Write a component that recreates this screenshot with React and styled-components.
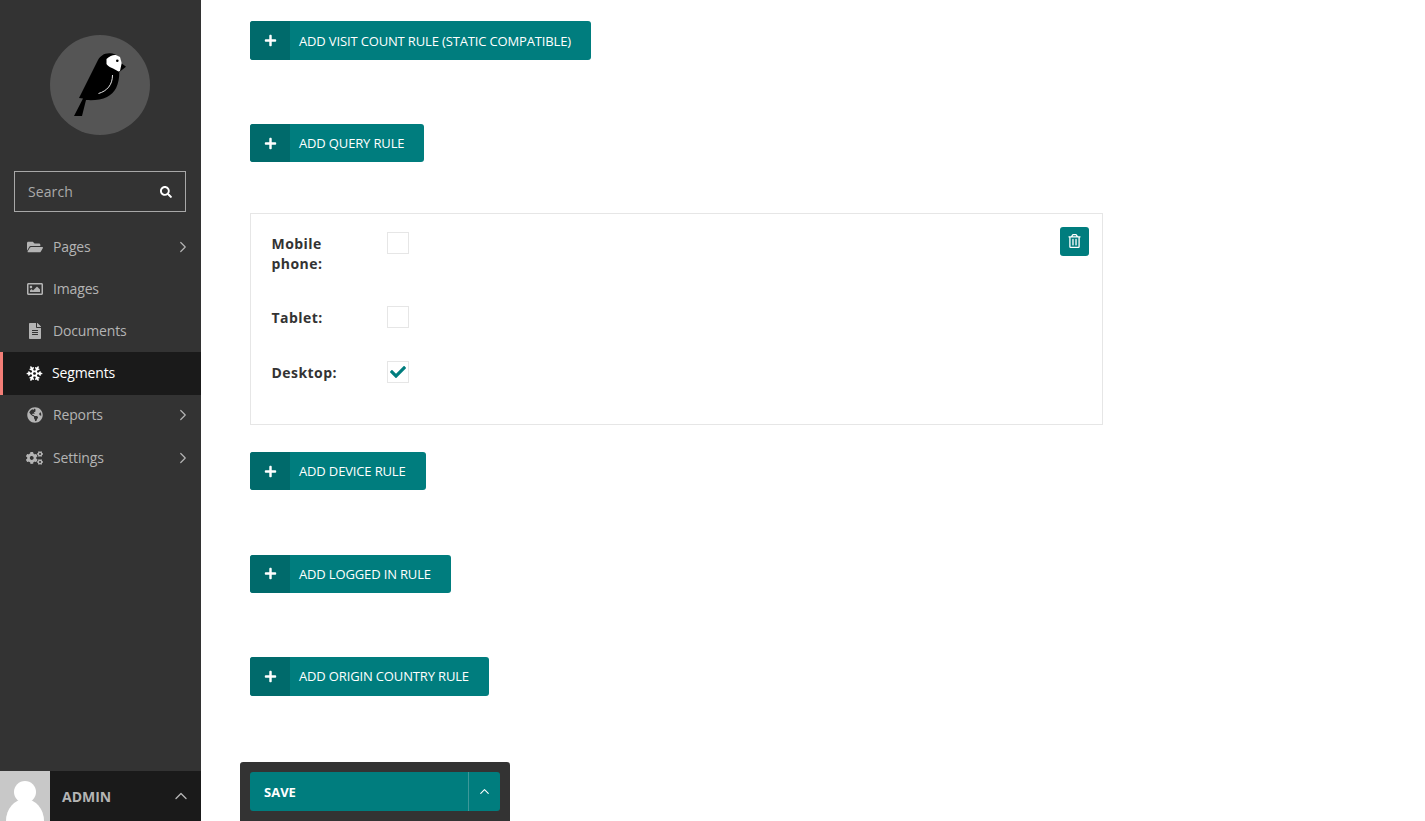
import React from 'react';
import styled, { createGlobalStyle } from 'styled-components';
import { FaFolderOpen, FaRegImage, FaFileAlt, FaGlobeAmericas, FaCogs, FaPlus, FaCheck, FaSearch, FaRegTrashAlt } from 'react-icons/fa';
import { ChevronRight, ChevronUp, Snowflake } from 'lucide-react';

const Global = createGlobalStyle`
  html, body { margin: 0; padding: 0; height: 100%; overflow: hidden; background: #fff; }
  * { box-sizing: border-box; }
  body { font-family: "Open Sans", "Liberation Sans", sans-serif; color: #333; }
`;
const Page = styled.div`display: flex; height: 821px;`;
const Sidebar = styled.aside`
  width: 201px; flex: none; background: #333; display: flex; flex-direction: column; height: 100%;
`;
const LogoWrap = styled.div`display: flex; justify-content: center; padding: 35px 1px 36px 0;`;
const Logo = styled.svg`width: 100px; height: 100px; display: block;`;
const SearchBox = styled.div`
  margin: 0 15px 0 14px; height: 41px; border: 1px solid #a8a8a8; display: flex; align-items: center;
  justify-content: space-between; padding: 0 13px 0 13px; color: #aaa; font-size: 14px; letter-spacing: .1px;
  svg { color: #fff; width: 12px; height: 12px; }
`;
const Nav = styled.nav`margin-top: 14px; display: flex; flex-direction: column; flex: 1;`;
const NavItem = styled.div`
  height: ${p => p.$h}px; display: flex; align-items: center; font-size: 14px; letter-spacing: -.15px;
  padding: 0 9px ${p => p.$pb}px ${p => (p.$active ? 23 : 26)}px;
  color: ${p => (p.$active ? '#fff' : '#b4b4b4')};
  background: ${p => (p.$active ? '#1a1a1a' : 'transparent')};
  border-left: ${p => (p.$active ? '3px solid #f37e77' : 'none')};
`;
const NavIcon = styled.span`
  width: 17px; margin-right: ${p => (p.$active ? 9 : 10)}px; display: flex; justify-content: center; flex: none;
  color: ${p => (p.$active ? '#fff' : '#b4b4b4')};
  svg { width: ${p => p.$size}px; height: ${p => p.$size}px; display: block; }
`;
const NavLabel = styled.span`flex: 1; line-height: 20px;`;
const NavChevron = styled(ChevronRight)`width: 18px; height: 18px; color: #b4b4b4; stroke-width: 1.6;`;
const Account = styled.div`height: 50px; background: #1a1a1a; display: flex; align-items: center; flex: none;`;
const Avatar = styled.svg`width: 50px; height: 50px; display: block; flex: none;`;
const AccountName = styled.span`flex: 1; margin-left: 12px; font-size: 14px; font-weight: 700; color: #b4b4b4;`;
const AccountChevron = styled(ChevronUp)`width: 20px; height: 20px; color: #b4b4b4; margin-right: 10px; stroke-width: 1.6;`;

const Main = styled.main`flex: 1; height: 100%; padding-left: 39px; display: flex; flex-direction: column; min-width: 0;`;
const Rules = styled.div`flex: 1; padding: 21.4px 0 0 10px;`;
const AddWrap = styled.div`margin-bottom: ${p => p.$mb}px;`;
const AddButton = styled.button`
  display: inline-flex; align-items: center; height: 38.4px; border: 0; padding: 0 20px 0 0; background: #007d7e; color: #fff;
  border-radius: 3px; overflow: hidden; font-family: inherit; font-size: 13px; font-weight: 400; letter-spacing: -.15px;
`;
const PlusCell = styled.span`
  width: 40px; align-self: stretch; background: #006a6b; margin-right: 9px; display: flex; align-items: center; justify-content: center;
  svg { width: 13px; height: 13px; }
`;
const RulePanel = styled.section`
  position: relative; width: 853px; height: 212px; border: 1px solid #e6e6e6; margin-bottom: 27px; padding: 20px 20px 0 20.5px;
`;
const Row = styled.div`
  display: grid; grid-template-columns: 115.5px 22px; margin-bottom: ${p => p.$mb}px;
`;
const FieldLabel = styled.label`font-size: 14px; font-weight: 700; line-height: 20px; letter-spacing: .45px; color: #333; width: 72px; padding-top: ${p => p.$pt || 0}px;`;
const Check = styled.span`
  width: 22px; height: 22px; border: 1px solid #e6e6e6; display: flex; align-items: center; justify-content: center; color: #007d7e;
  margin-top: ${p => p.$mt || 0}px;
  svg { width: 16px; height: 16px; }
`;
const TrashButton = styled.button`
  position: absolute; top: 13px; right: 13px; width: 29px; height: 29px; border: 0; padding: 0; border-radius: 3px; background: #007d7e; color: #fff;
  display: flex; align-items: center; justify-content: center;
  svg { width: 13px; height: 14px; }
`;
const Footer = styled.div`
  width: 270px; height: 59px; background: #333; border-radius: 3px 3px 0 0; padding: 10px 10px 0; flex: none;
`;
const SaveGroup = styled.div`
  height: 39px; background: #007d7e; color: #fff; border-radius: 3px; display: flex; align-items: center;
`;
const SaveLabel = styled.span`flex: 1; padding-left: 14px; font-size: 13px; font-weight: 700;`;
const SaveToggle = styled.span`
  width: 32px; align-self: stretch; border-left: 1px solid #3d9899; display: flex; align-items: center; justify-content: center;
  svg { width: 15px; height: 15px; stroke-width: 1.8; }
`;

const Bird = () => (
  <Logo viewBox="0 0 100 100">
    <circle cx="50" cy="50" r="50" fill="#555" />
    <path d="M24 81 L32 81 L36 65 C43 65.5 51.5 65 57 62 C65 58 69.3 50 69.3 37 L76 31.7 L71.5 28.3 C71 23.5 67 18.5 60 18.3 C54 18 50.5 21 48 25 L29 63 L33 63.5 Z" fill="#000" />
    <path d="M56.5 24 C60 21 63 19.5 66 20 L70 22 L71.7 28 L70 36 L68.5 36.5 C64 33.5 58 32 56.5 29 Z" fill="#fff" />
    <circle cx="67.3" cy="25.8" r="1.3" fill="#000" />
    <path d="M62.5 40 C62.5 50 57 56 48.5 58.5" fill="none" stroke="#fff" strokeWidth="0.9" />
  </Logo>
);

const items = [
  { label: 'Pages', icon: <FaFolderOpen />, more: true, h: 42, size: 16, pb: 0 },
  { label: 'Images', icon: <FaRegImage />, h: 42, size: 16, pb: 0 },
  { label: 'Documents', icon: <FaFileAlt />, h: 42, size: 16, pb: 0 },
  { label: 'Segments', icon: <Snowflake strokeWidth={2.4} />, active: true, h: 43, size: 17, pb: 1 },
  { label: 'Reports', icon: <FaGlobeAmericas />, more: true, h: 42, size: 16, pb: 2 },
  { label: 'Settings', icon: <FaCogs />, more: true, h: 43, size: 18, pb: 1 },
];

const Add = ({ children, mb }) => (
  <AddWrap $mb={mb}>
    <AddButton><PlusCell><FaPlus /></PlusCell>{children}</AddButton>
  </AddWrap>
);

export default function App() {
  return (
    <Page>
      <Global />
      <Sidebar>
        <LogoWrap><Bird /></LogoWrap>
        <SearchBox>Search<FaSearch /></SearchBox>
        <Nav>
          {items.map(it => (
            <NavItem key={it.label} $active={it.active} $h={it.h} $pb={it.pb}>
              <NavIcon $active={it.active} $size={it.size}>{it.icon}</NavIcon>
              <NavLabel>{it.label}</NavLabel>
              {it.more && <NavChevron />}
            </NavItem>
          ))}
        </Nav>
        <Account>
          <Avatar viewBox="0 0 50 50">
            <rect width="50" height="50" fill="#c8c8c8" />
            <circle cx="25" cy="21" r="11" fill="#fff" />
            <ellipse cx="25" cy="50" rx="19" ry="22" fill="#fff" />
          </Avatar>
          <AccountName>ADMIN</AccountName>
          <AccountChevron />
        </Account>
      </Sidebar>
      <Main>
        <Rules>
          <Add mb={64.2}>ADD VISIT COUNT RULE (STATIC COMPATIBLE)</Add>
          <Add mb={50.6}>ADD QUERY RULE</Add>
          <RulePanel>
            <Row $mb={33}>
              <FieldLabel>Mobile phone:</FieldLabel>
              <Check $mt={-2} />
            </Row>
            <Row $mb={34}>
              <FieldLabel $pt={1}>Tablet:</FieldLabel>
              <Check $mt={-1} />
            </Row>
            <Row $mb={0}>
              <FieldLabel $pt={1}>Desktop:</FieldLabel>
              <Check $mt={-1}><FaCheck /></Check>
            </Row>
            <TrashButton><FaRegTrashAlt /></TrashButton>
          </RulePanel>
          <Add mb={64.2}>ADD DEVICE RULE</Add>
          <Add mb={64.2}>ADD LOGGED IN RULE</Add>
          <Add mb={0}>ADD ORIGIN COUNTRY RULE</Add>
        </Rules>
        <Footer>
          <SaveGroup>
            <SaveLabel>SAVE</SaveLabel>
            <SaveToggle><ChevronUp /></SaveToggle>
          </SaveGroup>
        </Footer>
      </Main>
    </Page>
  );
}
